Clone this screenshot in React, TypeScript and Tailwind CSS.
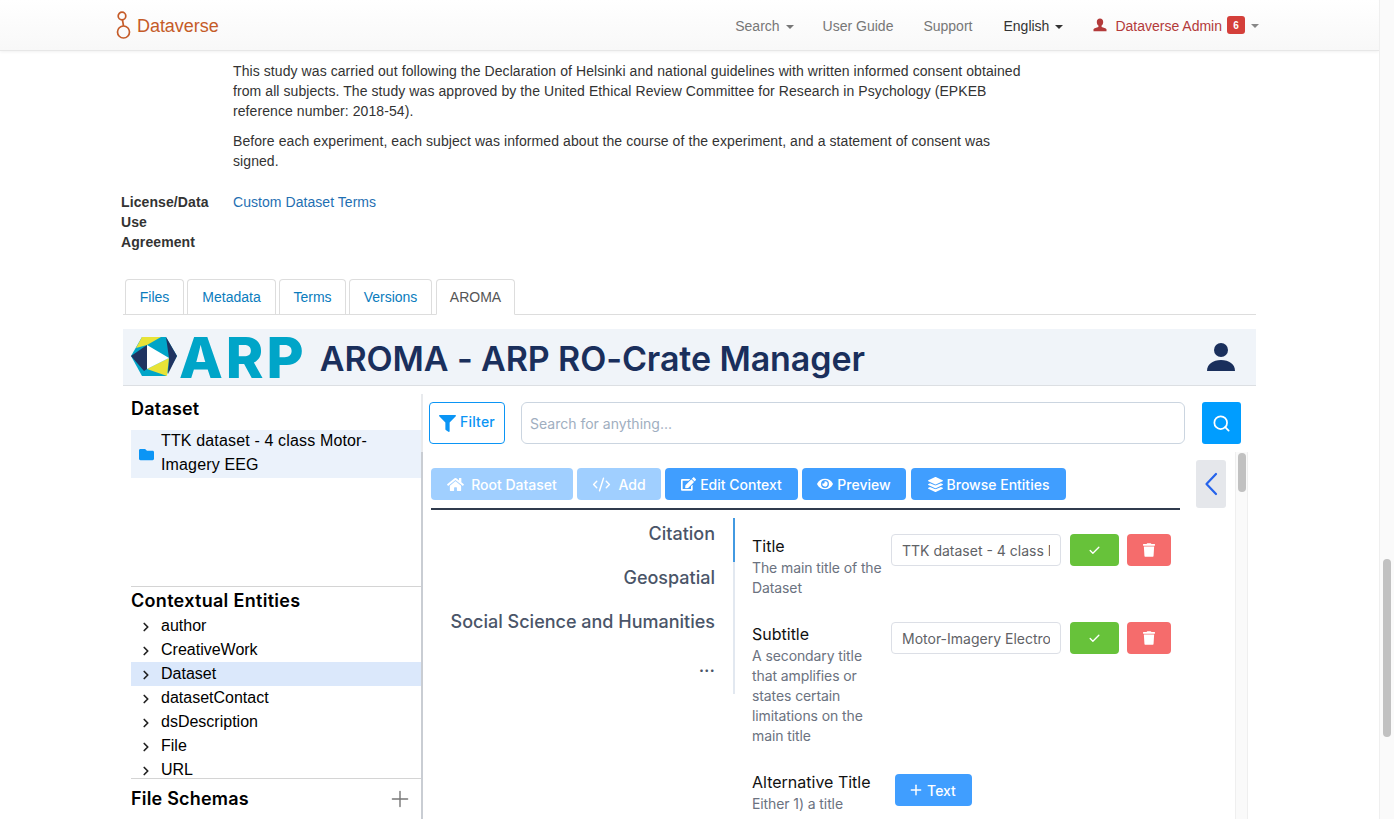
import React from "react";
import { Check, Plus, ChevronRight, Search, CodeXml } from "lucide-react";
import { FaFilter, FaFolder, FaHome, FaEdit, FaEye, FaLayerGroup, FaTrash } from "react-icons/fa";

const sans = "font-['Liberation_Sans',Arial,sans-serif]";
const inter = "font-['Inter',sans-serif]";

function Caret({ cls }: { cls: string }) {
  return <span className={`inline-block w-0 h-0 border-x-[4px] border-x-transparent border-t-[4px] ml-[6px] align-middle ${cls}`} />;
}

function NavBar() {
  return (
    <div className={`h-[51px] shrink-0 bg-gradient-to-b from-white to-[#f8f8f8] border-b border-[#e7e7e7] shadow-[0_1px_3px_rgba(0,0,0,0.06)] flex items-center pt-[2px] pl-[115px] pr-[120px] text-[14px] ${sans}`}>
      <svg width="18" height="30" viewBox="0 0 18 30" className="mr-[4px] mt-[-3px]" fill="none" stroke="#c55b28" strokeWidth="1.7">
        <circle cx="7" cy="6" r="3.8" />
        <path d="M7.500 10 L8.500 16" />
        <circle cx="8.500" cy="22" r="6" />
      </svg>
      <span className="text-[#c55b28] text-[18px] tracking-[-0.05px]">Dataverse</span>
      <div className="ml-auto flex items-center text-[#777]">
        <span>Search<Caret cls="border-t-[#777]" /></span>
        <span className="ml-[29px]">User Guide</span>
        <span className="ml-[30px]">Support</span>
        <span className="ml-[31px] text-[#333]">English<Caret cls="border-t-[#333]" /></span>
        <span className="ml-[30px] flex items-center text-[#b33a3a]">
          <svg width="14" height="14" viewBox="0 0 14 14" fill="#b33a3a" className="mr-[8px] mt-[-2px]"><path d="M7 0.500c2 0 3.200 1.500 3.200 3.400 0 1.500-.7 3-1.600 3.700v1.300c1.800.6 4.400 1.200 4.900 2.400v1.900H.5v-1.900c.5-1.200 3.100-1.800 4.900-2.400V7.600C4.500 6.900 3.800 5.400 3.800 3.900 3.800 2 5 .5 7 .5z" /></svg>
          Dataverse Admin
          <span className="ml-[5px] w-[18px] h-[18px] rounded-[3px] bg-[#d43f3a] text-white text-[10px] font-bold flex items-center justify-center mt-[-2px]">6</span>
          <Caret cls="border-t-[#888]" />
        </span>
      </div>
    </div>
  );
}

function Tabs() {
  const t = [
    { n: "Files", w: "w-[59px]" },
    { n: "Metadata", w: "w-[89px]" },
    { n: "Terms", w: "w-[67px]" },
    { n: "Versions", w: "w-[83px]" },
  ];
  return (
    <div className="mt-[27px] ml-[123px] w-[1133px] h-[36px] shrink-0 border-b border-[#ddd] flex pl-[2px] gap-[3px] text-[14px]">
      {t.map((x) => (
        <div key={x.n} className={`${x.w} h-[35px] border border-[#ddd] border-b-0 rounded-t-[4px] text-[#0a7cbd] flex items-center justify-center`}>{x.n}</div>
      ))}
      <div className="ml-[1px] w-[79px] h-[36px] border border-[#ddd] border-b-white rounded-t-[4px] text-[#555] bg-white flex items-center justify-center">AROMA</div>
    </div>
  );
}

function Logo() {
  return (
    <svg width="46" height="40" viewBox="0 0 46 40" className="shrink-0">
      <polygon points="0,19 11,0 35,0 46,19 35,39 11,39" fill="#00a5c8" />
      <polygon points="11,0 30,0 16,8 5,11" fill="#e8e337" />
      <polygon points="0,19 16,8 16,32 13,34" fill="#1f3361" />
      <polygon points="35,0 46,19 37,37 38,21" fill="#1f3361" />
      <polygon points="38,21 36,39 16,32" fill="#e8e337" />
      <polygon points="16,8 38,21 16,32" fill="#ffffff" />
    </svg>
  );
}

function Header() {
  return (
    <div className={`mt-[14px] ml-[123px] w-[1133px] h-[57px] shrink-0 bg-[#f0f4f9] border-b border-[#dcdfe3] flex items-center pl-[8px] pr-[21px] ${inter}`}>
      <Logo />
      <span className="ml-[2px] text-[#00a5c8] font-extrabold text-[57px] leading-none tracking-[3px]">ARP</span>
      <span className="ml-[13px] mt-[2px] text-[#1a2f5c] font-semibold text-[34px] tracking-[-0.1px]">AROMA - ARP RO-Crate Manager</span>
      <svg width="28" height="28" viewBox="0 0 28 28" fill="#1a2f5c" className="ml-auto">
        <circle cx="14" cy="7" r="7" />
        <path d="M0 28 C0 21 6 17 14 17 C22 17 28 21 28 28 Z" />
      </svg>
    </div>
  );
}

function Side() {
  const items = ["author", "CreativeWork", "Dataset", "datasetContact", "dsDescription", "File", "URL"];
  return (
    <div className={`w-[298px] h-[433px] shrink-0 flex flex-col pt-[10px] text-black ${sans}`}>
      <div className={`pl-[8px] text-[18px] font-semibold leading-[26px] tracking-[0.2px] ${inter}`}>Dataset</div>
      <div className="ml-[8px] mt-[8px] h-[48px] bg-[#ebf2fb] flex items-center pl-[7px] text-[16px] leading-[24px] tracking-[0.15px]">
        <FaFolder className="w-[17px] h-[15px] text-[#0b95f5] shrink-0" />
        <span className="ml-[6px] w-[240px] mt-[-2px]">TTK dataset - 4 class Motor-Imagery EEG</span>
      </div>
      <div className="ml-[8px] mt-[108px] border-t border-[#d4d4d4] pt-[1px]">
        <div className={`text-[18px] font-semibold leading-[26px] tracking-[0.3px] ${inter}`}>Contextual Entities</div>
        {items.map((x) => (
          <div key={x} className={`h-[24px] flex items-center text-[16px] ${x === "Dataset" ? "bg-[#dbe8fb]" : ""}`}>
            <ChevronRight className="w-[14px] h-[14px] ml-[8px] mt-[2px] text-[#222]" strokeWidth={3} />
            <span className="ml-[8px]">{x}</span>
          </div>
        ))}
      </div>
      <div className={`ml-[8px] mt-[-4px] border-t border-[#d4d4d4] pt-[7px] flex items-center pr-[8px] text-[18px] font-semibold leading-[26px] tracking-[0.2px] ${inter}`}>
        <span>File Schemas</span>
        <Plus className="ml-auto w-[26px] h-[26px] text-[#777]" strokeWidth={1.300} />
      </div>
    </div>
  );
}

function Btn({ icon, label, w, faded }: { icon: React.ReactNode; label: string; w: string; faded?: boolean }) {
  return (
    <div className={`${w} h-[32px] rounded-[4px] text-white text-[14px] font-medium flex items-center justify-center gap-[4px] ${faded ? "bg-[#a0cfff]" : "bg-[#409eff]"}`}>
      {icon}
      <span>{label}</span>
    </div>
  );
}

function Field({ label, desc, value, h, descW }: { label: string; desc: string; value: string; h: string; descW: string }) {
  return (
    <div className={`flex ${h}`}>
      <div className="w-[139px] shrink-0">
        <div className="text-[16px] font-normal text-[#111] leading-[24px]">{label}</div>
        <div className={`text-[14px] text-[#6b7280] leading-[20px] tracking-[-0.1px] ${descW}`}>{desc}</div>
      </div>
      <input readOnly value={value} className="w-[170px] h-[32px] border border-[#dcdfe6] rounded-[4px] text-[14px] text-[#606266] px-[10px] outline-none" />
      <div className="ml-[9px] w-[49px] h-[32px] rounded-[4px] bg-[#67c23a] flex items-center justify-center">
        <Check className="w-[13px] h-[13px] text-white" strokeWidth={2.500} />
      </div>
      <div className="ml-[8px] w-[44px] h-[32px] rounded-[4px] bg-[#f56c6c] flex items-center justify-center">
        <FaTrash className="w-[12px] h-[14px] text-white" />
      </div>
    </div>
  );
}

function Editor() {
  return (
    <div className={`flex-1 flex flex-col ${inter}`}>
      <div className="h-[42px] mt-[16px] flex pl-[6px]">
        <div className="w-[76px] h-[42px] border border-[#0b95f5] rounded-[4px] text-[#0b95f5] text-[14px] font-medium flex items-center justify-center gap-[4px] tracking-[0.2px]">
          <FaFilter className="w-[17px] h-[17px] mt-[1px]" />
          <span className="mb-[3px]">Filter</span>
        </div>
        <input readOnly placeholder="Search for anything..." className="ml-[16px] w-[664px] h-[42px] border border-[#cbd5e0] rounded-[6px] text-[14px] placeholder:text-[#a0aec0] px-[8px] outline-none" />
        <div className="ml-[17px] w-[39px] h-[42px] bg-[#009dff] rounded-[3px] flex items-center justify-center">
          <Search className="w-[19px] h-[19px] text-white" strokeWidth={2.200} />
        </div>
      </div>
      <div className="flex mt-[8px] h-[367px] overflow-hidden">
        <div className="w-[812px] shrink-0 flex flex-col pl-[8px] overflow-hidden">
          <div className="flex items-start">
            <div className="w-[749px] shrink-0">
              <div className="mt-[16px] flex gap-[4px]">
                <Btn w="w-[142px]" faded label="Root Dataset" icon={<FaHome className="w-[17px] h-[15px] mr-[3px]" />} />
                <Btn w="w-[84px]" faded label="Add" icon={<CodeXml className="w-[19px] h-[19px] mr-[3px]" strokeWidth={1.800} />} />
                <Btn w="w-[133px]" label="Edit Context" icon={<FaEdit className="w-[15px] h-[14px]" />} />
                <Btn w="w-[104px]" label="Preview" icon={<FaEye className="w-[16px] h-[14px]" />} />
                <div className="ml-[1px]"><Btn w="w-[155px]" label="Browse Entities" icon={<FaLayerGroup className="w-[15px] h-[15px]" />} /></div>
              </div>
              <div className="mt-[8px] h-[2px] bg-[#303b4d]" />
            </div>
            <div className="ml-[16px] mt-[8px] w-[30px] h-[48px] bg-[#e5e7eb] rounded-[3px] flex items-center justify-center">
              <svg width="14" height="24" viewBox="0 0 14 24" fill="none" stroke="#2563eb" strokeWidth="2.200" strokeLinecap="round" strokeLinejoin="round">
                <path d="M12 2 L2.500 12 L12 22" />
              </svg>
            </div>
          </div>
          <div className="flex mt-[8px]">
            <div className="w-[304px] shrink-0 flex">
              <div className="w-[284px] shrink-0 flex flex-col items-end text-[18px] font-medium text-[#4a5568]">
                <div className="h-[44px] flex items-center mt-[-7px]">Citation</div>
                <div className="h-[44px] flex items-center">Geospatial</div>
                <div className="h-[44px] flex items-center">Social Science and Humanities</div>
                <div className="h-[44px] flex items-center">...</div>
              </div>
              <div className="ml-[18px] w-[2px] h-[176px] bg-[#e2e8f0] shrink-0">
                <div className="w-[2px] h-[44px] bg-[#4299e1]" />
              </div>
            </div>
            <div className="ml-[17px] flex flex-col w-[440px] pt-[16px]">
              <Field h="h-[88px]" label="Title" desc="The main title of the Dataset" descW="w-[135px]" value="TTK dataset - 4 class Motor-Imagery" />
              <Field h="h-[148px]" label="Subtitle" desc="A secondary title that amplifies or states certain limitations on the main title" descW="w-[120px]" value="Motor-Imagery Electroencephalography" />
              <div className="flex">
                <div className="w-[143px] shrink-0">
                  <div className="text-[16px] font-normal text-[#111] leading-[24px]">Alternative Title</div>
                  <div className="text-[14px] text-[#6b7280] leading-[20px] tracking-[-0.1px]">Either 1) a title</div>
                </div>
                <div className="mt-[4px] w-[77px] h-[32px] rounded-[4px] bg-[#409eff] text-white text-[14px] font-medium flex items-center justify-center gap-[3px] pr-[3px]">
                  <Plus className="w-[16px] h-[16px]" strokeWidth={2.200} />Text
                </div>
              </div>
            </div>
          </div>
        </div>
        <div className="w-[13px] h-full bg-[#fafafa] border-x border-[#efefef] flex justify-center pt-[1px]">
          <div className="w-[8px] h-[39px] bg-[#c1c1c1] rounded-[4px]" />
        </div>
      </div>
    </div>
  );
}

export default function App() {
  return (
    <div className={`w-[1394px] h-[819px] overflow-hidden flex bg-white ${sans}`}>
      <div className="w-[1379px] flex flex-col overflow-hidden">
        <NavBar />
        <div className="ml-[233px] w-[795px] mt-[10px] shrink-0 text-[14px] leading-[20px] text-[#333] tracking-[0.08px]">
          <p>This study was carried out following the Declaration of Helsinki and national guidelines with written informed consent obtained from all subjects. The study was approved by the United Ethical Review Committee for Research in Psychology (EPKEB reference number: 2018-54).</p>
          <p className="mt-[10px]">Before each experiment, each subject was informed about the course of the experiment, and a statement of consent was signed.</p>
        </div>
        <div className="flex mt-[21px] ml-[121px] shrink-0 text-[14px] leading-[20px] text-[#333]">
          <div className="w-[112px] pr-[10px] font-bold tracking-[0.1px]">License/Data Use Agreement</div>
          <div className="text-[#1f6fb2] tracking-[0.05px]">Custom Dataset Terms</div>
        </div>
        <Tabs />
        <Header />
        <div className="ml-[123px] w-[1133px] flex shrink-0">
          <Side />
          <div className="w-[2px] mt-[8px] shrink-0 flex flex-col">
            <div className="h-[58px] bg-[#e8eaed]" />
            <div className="flex-1 bg-[#c9cdd3]" />
          </div>
          <Editor />
        </div>
      </div>
      <div className="w-[15px] bg-[#fafafa] border-l border-[#efefef] flex flex-col items-center pt-[559px]">
        <div className="w-[8px] h-[178px] rounded-[4px] bg-[#c1c1c1]" />
      </div>
    </div>
  );
}
